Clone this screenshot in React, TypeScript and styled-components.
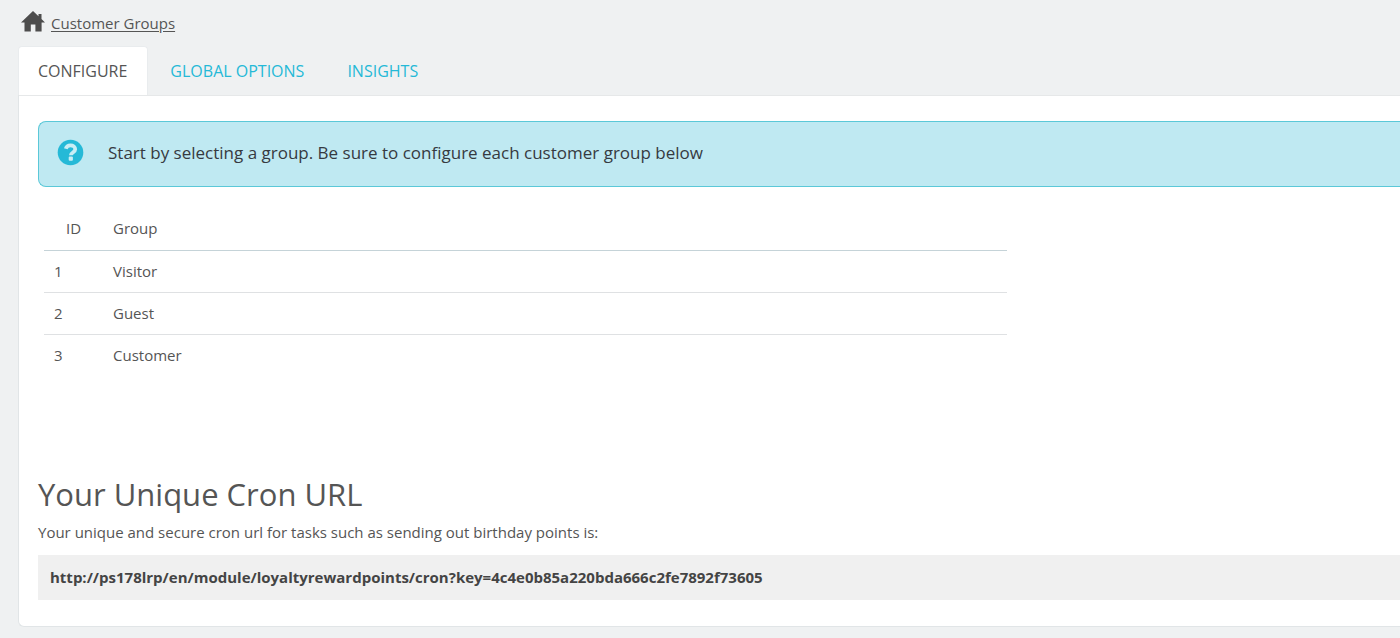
import React from 'react';
import styled, { createGlobalStyle, css } from 'styled-components';

const GlobalStyle = createGlobalStyle`
  *, *::before, *::after { box-sizing: border-box; }
  body {
    margin: 0;
    min-height: 100vh;
    background: #eff1f2;
    color: #555;
    font-family: "Open Sans", "Liberation Sans", sans-serif;
    font-size: 15px;
    line-height: 20px;
  }
`;

const Page = styled.main`
  padding: 10px 0 10px 18px;
`;

const Breadcrumb = styled.nav`
  display: flex;
  align-items: center;
  gap: 6px;
  height: 26px;
  padding-left: 3px;
`;

const BreadcrumbLink = styled.a`
  color: #555;
  text-decoration: underline;
  text-underline-offset: 2px;
`;

const HomeIcon = styled.svg`
  width: 24px;
  height: 22px;
  margin-bottom: 4px;
  fill: #4d4d4d;
`;

const TabList = styled.div`
  display: flex;
  margin-top: 10px;
  gap: 2px;
`;

const Tab = styled.button<{ $active?: boolean }>`
  height: 49px;
  padding: 0 20px 0 19px;
  border: 1px solid transparent;
  border-bottom: 0;
  border-radius: 4px 4px 0 0;
  background: transparent;
  color: #25b9d7;
  font: inherit;
  font-size: 16px;
  text-transform: uppercase;
  cursor: pointer;
  ${({ $active }) =>
    $active &&
    css`
      border-color: #e9ecee;
      background: #fff;
      color: #555;
    `}
`;

const Panel = styled.section`
  padding: 25px 0 26px 19px;
  border: 1px solid #e1e5e7;
  border-top-color: #e6e8e9;
  border-right: 0;
  border-radius: 0 0 0 6px;
  background: #fff;
`;

const Notice = styled.div`
  display: flex;
  align-items: center;
  gap: 24px;
  height: 66px;
  padding: 0 18px 3px;
  border: 1px solid #5bc8d8;
  border-right: 0;
  border-radius: 8px 0 0 8px;
  background: #bfe9f2;
  color: #363a41;
  font-size: 17px;
`;

const HelpIcon = styled.svg`
  flex: none;
  width: 27px;
  height: 27px;
`;

const TableWrap = styled.div`
  padding: 20px 0 0 6px;
`;

const GroupTable = styled.table`
  width: 71%;
  border-collapse: collapse;
  table-layout: fixed;
`;

const HeadCell = styled.th<{ $id?: boolean }>`
  width: ${({ $id }) => ($id ? '59px' : 'auto')};
  height: 43px;
  padding: 0 10px;
  padding-left: ${({ $id }) => ($id ? '22px' : '10px')};
  border-bottom: 1px solid #c5d3d8;
  font-weight: 400;
  text-align: left;
`;

const Cell = styled.td`
  height: 42px;
  padding: 0 10px;
`;

const Row = styled.tr`
  & + & ${Cell} {
    border-top: 1px solid #dfe1e3;
  }
`;

const Cron = styled.section`
  margin-top: 94px;
`;

const CronTitle = styled.h2`
  margin: 0;
  font-size: 31px;
  line-height: 48px;
  font-weight: 400;
`;

const CronText = styled.p`
  margin: 4px 0 13px;
`;

const CronUrl = styled.div`
  padding: 12px 12px 13px;
  background: #f0f0f0;
  color: #444;
  font-weight: 700;
`;

const tabs = ['Configure', 'Global options', 'Insights'];

const groups = [
  { id: 1, name: 'Visitor' },
  { id: 2, name: 'Guest' },
  { id: 3, name: 'Customer' },
];

export default function App() {
  return (
    <>
      <GlobalStyle />
      <Page>
        <Breadcrumb aria-label="Breadcrumb">
          <HomeIcon viewBox="0 0 24 22" aria-hidden="true">
            <path d="M12 1 0 12.500h3.500V21.500h6.300v-7h4.600v7h6.200v-9H24l-3.500-3.400V4h-3v2.200Z" />
          </HomeIcon>
          <BreadcrumbLink href="#groups">Customer Groups</BreadcrumbLink>
        </Breadcrumb>

        <TabList role="tablist">
          {tabs.map((label, index) => (
            <Tab
              key={label}
              type="button"
              role="tab"
              aria-selected={index === 0}
              $active={index === 0}
            >
              {label}
            </Tab>
          ))}
        </TabList>

        <Panel>
          <Notice>
            <HelpIcon viewBox="0 0 27 27" aria-hidden="true">
              <circle cx="13.500" cy="13.500" r="12.800" fill="#25b9d7" />
              <path
                d="M8.800 9.800C9.400 7.600 11 6.400 13.500 6.400c2.700 0 4.700 1.500 4.700 3.800 0 3.300-4.300 3.200-4.300 6"
                fill="none"
                stroke="#c9eef5"
                strokeWidth="3.800"
              />
              <rect x="11.700" y="17.600" width="4.200" height="4.200" rx="1" fill="#c9eef5" />
            </HelpIcon>
            <span>Start by selecting a group. Be sure to configure each customer group below</span>
          </Notice>

          <TableWrap id="groups">
            <GroupTable>
              <thead>
                <tr>
                  <HeadCell scope="col" $id>ID</HeadCell>
                  <HeadCell scope="col">Group</HeadCell>
                </tr>
              </thead>
              <tbody>
                {groups.map((group) => (
                  <Row key={group.id}>
                    <Cell>{group.id}</Cell>
                    <Cell>{group.name}</Cell>
                  </Row>
                ))}
              </tbody>
            </GroupTable>
          </TableWrap>

          <Cron>
            <CronTitle>Your Unique Cron URL</CronTitle>
            <CronText>
              Your unique and secure cron url for tasks such as sending out birthday points is:
            </CronText>
            <CronUrl>
              http://ps178lrp/en/module/loyaltyrewardpoints/cron?key=4c4e0b85a220bda666c2fe7892f73605
            </CronUrl>
          </Cron>
        </Panel>
      </Page>
    </>
  );
}
